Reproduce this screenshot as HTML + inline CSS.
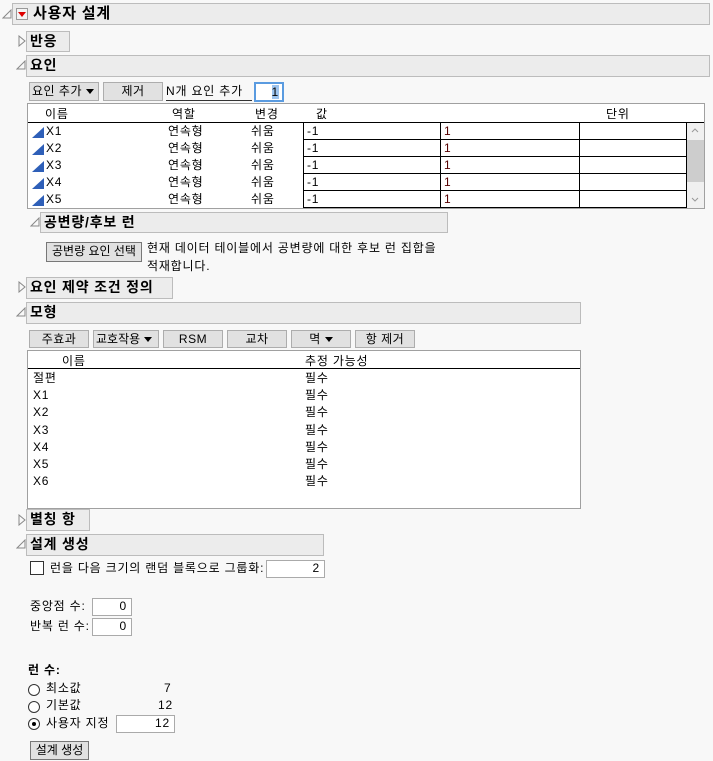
<!DOCTYPE html>
<html><head><meta charset="utf-8"><style>
body{margin:0;width:713px;height:761px;background:#f8f8f8;font-family:"Liberation Sans","Noto Sans CJK KR","NanumGothic",sans-serif;font-size:12px;color:#000;position:relative;overflow:hidden;letter-spacing:0.8px}
.a{position:absolute;white-space:nowrap}
.h{position:absolute;background:#ececec;border:1px solid #bcbcbc;box-sizing:border-box;font-weight:bold;font-size:14px;line-height:19px;padding-left:3px;white-space:nowrap}
.b{position:absolute;background:#e1e1e1;border:1px solid #adadad;box-sizing:border-box;text-align:center;line-height:16px;font-size:12px;white-space:nowrap;letter-spacing:0.5px}
.t{position:absolute;width:0;height:0}
.inp{position:absolute;background:#fff;border:1px solid #aaa;box-sizing:border-box;text-align:right;padding-right:4px;line-height:15px}
.tri{display:inline-block;width:0;height:0;border-left:4px solid transparent;border-right:4px solid transparent;border-top:5px solid #000;vertical-align:middle;margin-left:4px}
.cell{position:absolute;background:#fff;border:1px solid #000;box-sizing:border-box;height:18px;line-height:16px;padding-left:3px}
svg{position:absolute}
</style></head><body>
<svg style="left:2px;top:9px" width="10" height="10"><path d="M1 9 L9 1 L9 9 Z" fill="none" stroke="#888"/></svg>
<div class="h" style="left:12px;top:3px;width:698px;height:22px;padding-left:20px;font-size:15px">사용자 설계</div>
<div class="a" style="left:16px;top:8px;width:12px;height:12px;background:#f4f4f4;border:1px solid #999;box-sizing:border-box"></div>
<div class="t" style="left:18px;top:12px;border-left:4px solid transparent;border-right:4px solid transparent;border-top:5px solid #d00"></div>

<svg style="left:18px;top:35px" width="8" height="12"><path d="M1 1 L7 6 L1 11 Z" fill="none" stroke="#888"/></svg>
<div class="h" style="left:26px;top:31px;width:44px;height:21px">반응</div>

<svg style="left:16px;top:60px" width="10" height="10"><path d="M1 9 L9 1 L9 9 Z" fill="none" stroke="#888"/></svg>
<div class="h" style="left:26px;top:55px;width:684px;height:22px">요인</div>

<div class="b" style="left:29px;top:82px;width:70px;height:19px;text-align:left;padding-left:2px">요인 추가<span class="tri"></span></div>
<div class="b" style="left:103px;top:82px;width:60px;height:19px">제거</div>
<div class="a" style="left:166px;top:83px;width:86px;border-bottom:1px solid #333;line-height:17px">N개 요인 추가</div>
<div class="a" style="left:254px;top:82px;width:30px;height:20px;border:2px solid #5a9be0;box-sizing:border-box;background:#fff;text-align:right;padding-right:3px;line-height:16px"><span style="background:#9cc3ee">1</span></div>

<div class="a" style="left:27px;top:103px;width:678px;height:106px;border:1px solid #a0a0a0;background:#fff;box-sizing:border-box"></div>
<div class="a" style="left:28px;top:122px;width:676px;height:1px;background:#000"></div>
<div class="a" style="left:45px;top:105px">이름</div>
<div class="a" style="left:172px;top:105px">역할</div>
<div class="a" style="left:255px;top:105px">변경</div>
<div class="a" style="left:316px;top:105px">값</div>
<div class="a" style="left:606px;top:105px">단위</div>
<div class="a" style="left:686px;top:123px;width:18px;height:85px;background:#f0f0f0"></div>
<div class="a" style="left:686px;top:140px;width:18px;height:42px;background:#cdcdcd"></div>
<svg style="left:690px;top:126px" width="10" height="80"><path d="M2 6 L5 3 L8 6" fill="none" stroke="#999"/><path d="M2 72 L5 75 L8 72" fill="none" stroke="#999"/></svg>

<svg style="left:31px;top:126px" width="14" height="80">
<path d="M1 12 L13 1 L13 12 Z" fill="#2e5fb8"/><path d="M1 29 L13 18 L13 29 Z" fill="#2e5fb8"/><path d="M1 46 L13 35 L13 46 Z" fill="#2e5fb8"/><path d="M1 63 L13 52 L13 63 Z" fill="#2e5fb8"/><path d="M1 80 L13 69 L13 80 Z" fill="#2e5fb8"/></svg>
<div class="a" style="left:46px;top:123px;line-height:17px">X1<br>X2<br>X3<br>X4<br>X5</div>
<div class="a" style="left:168px;top:123px;line-height:17px">연속형<br>연속형<br>연속형<br>연속형<br>연속형</div>
<div class="a" style="left:251px;top:123px;line-height:17px">쉬움<br>쉬움<br>쉬움<br>쉬움<br>쉬움</div>
<div class="cell" style="left:303px;top:122px;width:138px">-1</div><div class="cell" style="left:440px;top:122px;width:140px;color:#500">1</div><div class="cell" style="left:579px;top:122px;width:108px"></div>
<div class="cell" style="left:303px;top:139px;width:138px">-1</div><div class="cell" style="left:440px;top:139px;width:140px;color:#500">1</div><div class="cell" style="left:579px;top:139px;width:108px"></div>
<div class="cell" style="left:303px;top:156px;width:138px">-1</div><div class="cell" style="left:440px;top:156px;width:140px;color:#500">1</div><div class="cell" style="left:579px;top:156px;width:108px"></div>
<div class="cell" style="left:303px;top:173px;width:138px">-1</div><div class="cell" style="left:440px;top:173px;width:140px;color:#500">1</div><div class="cell" style="left:579px;top:173px;width:108px"></div>
<div class="cell" style="left:303px;top:190px;width:138px">-1</div><div class="cell" style="left:440px;top:190px;width:140px;color:#500">1</div><div class="cell" style="left:579px;top:190px;width:108px"></div>

<svg style="left:30px;top:217px" width="10" height="10"><path d="M1 9 L9 1 L9 9 Z" fill="none" stroke="#888"/></svg>
<div class="h" style="left:40px;top:212px;width:408px;height:21px">공변량/후보 런</div>
<div class="b" style="left:46px;top:242px;width:96px;height:20px;border-color:#777;letter-spacing:0">공변량 요인 선택</div>
<div class="a" style="left:147px;top:239px;line-height:18px">현재 데이터 테이블에서 공변량에 대한 후보 런 집합을<br>적재합니다.</div>

<svg style="left:18px;top:281px" width="8" height="12"><path d="M1 1 L7 6 L1 11 Z" fill="none" stroke="#888"/></svg>
<div class="h" style="left:26px;top:277px;width:147px;height:22px">요인 제약 조건 정의</div>

<svg style="left:16px;top:307px" width="10" height="10"><path d="M1 9 L9 1 L9 9 Z" fill="none" stroke="#888"/></svg>
<div class="h" style="left:26px;top:302px;width:555px;height:22px">모형</div>
<div class="b" style="left:29px;top:330px;width:60px;height:18px">주효과</div>
<div class="b" style="left:93px;top:330px;width:66px;height:18px;text-align:left;padding-left:2px;letter-spacing:0">교호작용<span class="tri"></span></div>
<div class="b" style="left:163px;top:330px;width:60px;height:18px">RSM</div>
<div class="b" style="left:227px;top:330px;width:60px;height:18px">교차</div>
<div class="b" style="left:291px;top:330px;width:60px;height:18px">멱<span class="tri"></span></div>
<div class="b" style="left:355px;top:330px;width:60px;height:18px">항 제거</div>
<div class="a" style="left:27px;top:350px;width:554px;height:159px;border:1px solid #a0a0a0;background:#fff;box-sizing:border-box"></div>
<div class="a" style="left:28px;top:368px;width:552px;height:1px;background:#000"></div>
<div class="a" style="left:62px;top:352px">이름</div>
<div class="a" style="left:305px;top:352px">추정 가능성</div>
<div class="a" style="left:33px;top:370px;line-height:17.2px">절편<br>X1<br>X2<br>X3<br>X4<br>X5<br>X6</div>
<div class="a" style="left:305px;top:370px;line-height:17.2px">필수<br>필수<br>필수<br>필수<br>필수<br>필수<br>필수</div>

<svg style="left:18px;top:514px" width="8" height="12"><path d="M1 1 L7 6 L1 11 Z" fill="none" stroke="#888"/></svg>
<div class="h" style="left:26px;top:509px;width:64px;height:22px">별칭 항</div>
<svg style="left:16px;top:539px" width="10" height="10"><path d="M1 9 L9 1 L9 9 Z" fill="none" stroke="#888"/></svg>
<div class="h" style="left:26px;top:534px;width:298px;height:22px">설계 생성</div>

<div class="a" style="left:30px;top:561px;width:14px;height:14px;border:1px solid #333;background:#fff;box-sizing:border-box"></div>
<div class="a" style="left:50px;top:560px;line-height:17px">런을 다음 크기의 랜덤 블록으로 그룹화:</div>
<div class="inp" style="left:266px;top:560px;width:59px;height:18px">2</div>

<div class="a" style="left:30px;top:598px;line-height:17px">중앙점 수:</div>
<div class="inp" style="left:92px;top:598px;width:40px;height:18px">0</div>
<div class="a" style="left:30px;top:618px;line-height:17px">반복 런 수:</div>
<div class="inp" style="left:92px;top:618px;width:40px;height:18px">0</div>

<div class="a" style="left:28px;top:662px;font-weight:bold;line-height:17px">런 수:</div>
<div class="a" style="left:28px;top:684px;width:12px;height:12px;border:1px solid #333;border-radius:50%;background:#fff;box-sizing:border-box"></div>
<div class="a" style="left:46px;top:680px;line-height:17px">최소값</div>
<div class="a" style="left:164px;top:680px;line-height:17px">7</div>
<div class="a" style="left:28px;top:701px;width:12px;height:12px;border:1px solid #333;border-radius:50%;background:#fff;box-sizing:border-box"></div>
<div class="a" style="left:46px;top:697px;line-height:17px">기본값</div>
<div class="a" style="left:158px;top:697px;line-height:17px">12</div>
<div class="a" style="left:28px;top:718px;width:12px;height:12px;border:1px solid #333;border-radius:50%;background:#fff;box-sizing:border-box"></div>
<div class="a" style="left:32px;top:722px;width:4px;height:4px;border-radius:50%;background:#000"></div>
<div class="a" style="left:46px;top:715px;line-height:17px">사용자 지정</div>
<div class="inp" style="left:116px;top:715px;width:59px;height:18px">12</div>
<div class="b" style="left:30px;top:741px;width:59px;height:19px;border-color:#777;letter-spacing:0">설계 생성</div>
</body></html>
